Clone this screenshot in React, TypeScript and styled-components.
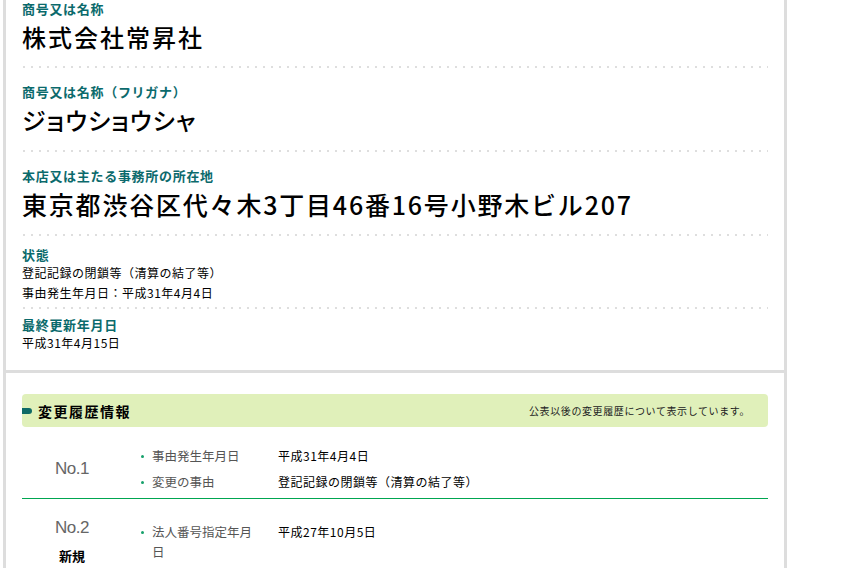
import styled, { createGlobalStyle } from 'styled-components'

const GlobalStyle = createGlobalStyle`
    body {
        margin: 0;
        background: #fff;
        font-family: "Noto Sans CJK JP", "Noto Sans", sans-serif;
        color: #000;
    }
`

const Panel = styled.div`
    margin-left: 3px;
    width: 778px;
    border-left: 3px solid #dddddd;
    border-right: 3px solid #dddddd;
    min-height: 568px;
`

const InfoSection = styled.section`
    padding: 0 16px 17px;
    border-bottom: 3px solid #dddddd;
`

const InfoItem = styled.div<{ $top: number; $bottom: number; $last?: boolean }>`
    padding-top: ${(p) => p.$top}px;
    padding-bottom: ${(p) => p.$bottom}px;
    background-image: ${(p) => (p.$last ? 'none' : 'linear-gradient(to right, #dedede 2px, transparent 2px)')};
    background-size: 8px 2px;
    background-repeat: repeat-x;
    background-position: 1px bottom;
    border-bottom: ${(p) => (p.$last ? 'none' : '2px solid transparent')};
    background-origin: border-box;
`

const ItemLabel = styled.div`
    font-size: 13px;
    line-height: 17px;
    font-weight: 700;
    letter-spacing: 0.7px;
    color: #0b6a6c;
`

const BigValue = styled.div<{ $size: number; $spacing: number; $palt?: boolean }>`
    margin-top: 4px;
    font-size: ${(p) => p.$size}px;
    line-height: 32px;
    font-weight: 500;
    letter-spacing: ${(p) => p.$spacing}px;
    font-feature-settings: ${(p) => (p.$palt ? '"palt"' : 'normal')};
`

const SmallValue = styled.div`
    font-size: 12px;
    line-height: 20px;
    letter-spacing: 0.5px;
`

const HistorySection = styled.section`
    padding: 21px 16px 0;
`

const HistoryBar = styled.div`
    display: flex;
    align-items: center;
    justify-content: space-between;
    height: 33px;
    background: #e0f0ba;
    border-radius: 4px;
    padding-right: 18px;
`

const BarTitle = styled.h2`
    display: flex;
    align-items: center;
    gap: 6px;
    margin: 0;
    font-size: 14px;
    font-weight: 700;
    letter-spacing: 1.5px;
`

const Marker = styled.span`
    width: 10px;
    height: 6px;
    background: #0e6a66;
    border-radius: 0 3px 3px 0;
`

const BarNote = styled.span`
    font-size: 10px;
    letter-spacing: 0.6px;
    color: #222;
`

const HistoryRow = styled.div<{ $divider?: boolean }>`
    display: flex;
    align-items: center;
    padding: 19px 0 ${(p) => (p.$divider ? 6 : 10)}px;
    border-bottom: ${(p) => (p.$divider ? '1px solid #00a651' : 'none')};
`

const NoColumn = styled.div`
    width: 100px;
    flex: none;
    display: flex;
    flex-direction: column;
    align-items: center;
    gap: 8px;
`

const NoText = styled.div`
    font-family: "Liberation Sans", Arial, sans-serif;
    font-size: 17px;
    color: #666;
    letter-spacing: -0.5px;
`

const NewTag = styled.div`
    font-size: 13px;
    font-weight: 700;
`

const DetailList = styled.ul`
    list-style: none;
    margin: 0;
    padding: 0 0 0 15px;
    display: flex;
    flex-direction: column;
    gap: 6px;
`

const DetailItem = styled.li`
    display: flex;
    line-height: 20px;
`

const DetailLabel = styled.span`
    position: relative;
    width: 112px;
    flex: none;
    margin-right: 14px;
    padding-left: 15px;
    font-size: 12.5px;
    color: #555;
    &::before {
        content: '';
        position: absolute;
        left: 4px;
        top: 9px;
        width: 3px;
        height: 3px;
        border-radius: 50%;
        background: #16a06b;
    }
`

const DetailValue = styled.span`
    font-size: 12px;
    letter-spacing: 0.5px;
`

const history = [
    {
        no: 'No.1',
        isNew: false,
        details: [
            ['事由発生年月日', '平成31年4月4日'],
            ['変更の事由', '登記記録の閉鎖等（清算の結了等）'],
        ],
    },
    {
        no: 'No.2',
        isNew: true,
        details: [['法人番号指定年月日', '平成27年10月5日']],
    },
]

export default function App() {
    return (
        <>
            <GlobalStyle />
            <Panel>
                <InfoSection>
                    <InfoItem $top={0} $bottom={13}>
                        <ItemLabel>商号又は名称</ItemLabel>
                        <BigValue $size={24} $spacing={2}>株式会社常昇社</BigValue>
                    </InfoItem>
                    <InfoItem $top={15} $bottom={14}>
                        <ItemLabel>商号又は名称（フリガナ）</ItemLabel>
                        <BigValue $size={24} $spacing={1} $palt>ジョウショウシャ</BigValue>
                    </InfoItem>
                    <InfoItem $top={15} $bottom={14}>
                        <ItemLabel>本店又は主たる事務所の所在地</ItemLabel>
                        <BigValue $size={25} $spacing={1.8}>東京都渋谷区代々木3丁目46番16号小野木ビル207</BigValue>
                    </InfoItem>
                    <InfoItem $top={10} $bottom={4}>
                        <ItemLabel>状態</ItemLabel>
                        <SmallValue>登記記録の閉鎖等（清算の結了等）</SmallValue>
                        <SmallValue>事由発生年月日：平成31年4月4日</SmallValue>
                    </InfoItem>
                    <InfoItem $top={7} $bottom={0} $last>
                        <ItemLabel>最終更新年月日</ItemLabel>
                        <SmallValue>平成31年4月15日</SmallValue>
                    </InfoItem>
                </InfoSection>
                <HistorySection>
                    <HistoryBar>
                        <BarTitle>
                            <Marker />
                            変更履歴情報
                        </BarTitle>
                        <BarNote>公表以後の変更履歴について表示しています。</BarNote>
                    </HistoryBar>
                    {history.map((h, i) => (
                        <HistoryRow key={h.no} $divider={i < history.length - 1}>
                            <NoColumn>
                                <NoText>{h.no}</NoText>
                                {h.isNew && <NewTag>新規</NewTag>}
                            </NoColumn>
                            <DetailList>
                                {h.details.map(([label, value]) => (
                                    <DetailItem key={label}>
                                        <DetailLabel>{label}</DetailLabel>
                                        <DetailValue>{value}</DetailValue>
                                    </DetailItem>
                                ))}
                            </DetailList>
                        </HistoryRow>
                    ))}
                </HistorySection>
            </Panel>
        </>
    )
}
